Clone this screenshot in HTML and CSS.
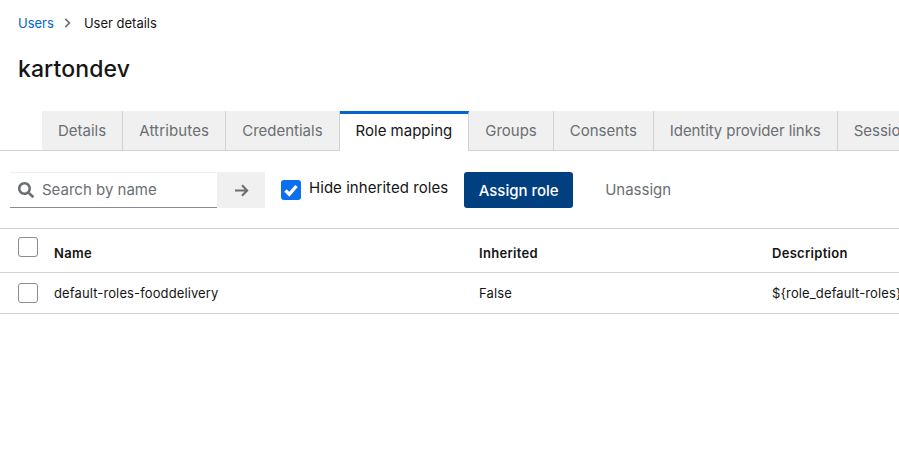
FILE: index.html
```html
<!DOCTYPE html>
<html lang="en">
<head>
    <meta charset="UTF-8">
    <meta name="viewport" content="width=device-width, initial-scale=1.0">
    <title>User details</title>
    <link rel="stylesheet" href="styles.css">
</head>
<body>
    <div class="header">
        <nav class="breadcrumb">
            <a href="#">Users</a>
            <svg class="crumbArrow" viewBox="0 0 8 12" width="7" height="10"><path d="M1.5 1 L6.2 6 L1.5 11" fill="none" stroke="#6a6e73" stroke-width="2"/></svg>
            <span>User details</span>
        </nav>
        <h1>kartondev</h1>
    </div>

    <div class="tabs">
        <div class="tab">Details</div>
        <div class="tab tabAttr">Attributes</div>
        <div class="tab">Credentials</div>
        <div class="tab active">Role mapping</div>
        <div class="tab">Groups</div>
        <div class="tab">Consents</div>
        <div class="tab tabLong">Identity provider links</div>
        <div class="tab">Sessions</div>
    </div>

    <div class="toolbar">
        <div class="search">
            <div class="searchInput">
                <svg viewBox="0 0 512 512" width="16" height="16"><path fill="#6a6e73" d="M505 442.700L405.300 343c-4.500-4.500-10.600-7-17-7H372c27.600-35.300 44-79.700 44-128C416 93.100 322.900 0 208 0S0 93.100 0 208s93.100 208 208 208c48.300 0 92.700-16.400 128-44v16.300c0 6.400 2.500 12.500 7 17l99.700 99.700c9.400 9.400 24.600 9.400 33.900 0l28.300-28.300c9.400-9.400 9.400-24.600.1-34zM208 336c-70.700 0-128-57.200-128-128 0-70.700 57.200-128 128-128 70.700 0 128 57.200 128 128 0 70.700-57.200 128-128 128z"/></svg>
                <span>Search by name</span>
            </div>
            <div class="searchGo">
                <svg viewBox="0 0 16 16" width="15" height="15"><path d="M1 8 H14 M8.500 2.500 L14 8 L8.500 13.500" fill="none" stroke="#6a6e73" stroke-width="2.200"/></svg>
            </div>
        </div>
        <label class="hideInherited">
            <span class="checked">
                <svg viewBox="0 0 16 16" width="16" height="16"><path d="M2.500 8.500 L6.300 12.300 L13.500 4" fill="none" stroke="#fff" stroke-width="3.400"/></svg>
            </span>
            <span class="hideText">Hide inherited roles</span>
        </label>
        <button class="assign">Assign role</button>
        <button class="unassign">Unassign</button>
    </div>

    <div class="row headRow">
        <span class="box headBox"></span>
        <span>Name</span>
        <span>Inherited</span>
        <span>Description</span>
    </div>
    <div class="row">
        <span class="box"></span>
        <span>default-roles-fooddelivery</span>
        <span>False</span>
        <span>${role_default-roles}</span>
    </div>
</body>
</html>
```
FILE: styles.css
```css
html, body {
    margin: 0;
    padding: 0;
    height: 100%;
    overflow: hidden;
    background-color: #fff;
    color: #151515;
    font-family: Inter, "Open Sans", sans-serif;
}

.header {
    padding: 14px 18px 0;
}

.breadcrumb {
    display: flex;
    align-items: center;
    height: 18px;
    font-size: 13px;
}

.breadcrumb a {
    color: #06c;
    text-decoration: none;
}

.crumbArrow {
    margin: 0 13px 0 10px;
}

h1 {
    margin: 0;
    padding-top: 20px;
    height: 34px;
    line-height: 34px;
    font-size: 23px;
    font-weight: 500;
    letter-spacing: 0.1px;
}

.tabs {
    display: flex;
    margin-top: 25px;
    padding-left: 42px;
    height: 40px;
    box-sizing: border-box;
    border-bottom: 1px solid #d2d2d2;
    white-space: nowrap;
}

.tab {
    flex: none;
    padding: 0 16px;
    height: 39px;
    line-height: 39px;
    box-sizing: border-box;
    font-size: 15px;
    color: #6a6e73;
    background-color: #f0f0f0;
    border-right: 1px solid #d2d2d2;
}

.tab.tabAttr {
    letter-spacing: 0.15px;
}

.tab.tabLong {
    letter-spacing: -0.08px;
}

.tab.active {
    height: 40px;
    color: #151515;
    background-color: #fff;
    border-top: 3px solid #06c;
    line-height: 34px;
}

.toolbar {
    display: flex;
    align-items: center;
    padding: 21px 0 0 10px;
    height: 36px;
}

.search {
    display: flex;
    height: 36px;
    width: 255px;
}

.searchInput {
    flex: 1;
    display: flex;
    align-items: center;
    gap: 8px;
    padding: 0 0 1px 8px;
    font-size: 15px;
    color: #6a6e73;
    border-top: 1px solid #f0f0f0;
    border-bottom: 1px solid #8a8d90;
    box-sizing: border-box;
}

.searchGo {
    width: 48px;
    display: flex;
    align-items: center;
    justify-content: center;
    background-color: #f0f0f0;
}

.hideInherited {
    display: flex;
    align-items: center;
    gap: 8px;
    margin-left: 16px;
    font-size: 15px;
    letter-spacing: 0.05px;
}

.hideText {
    margin-bottom: 6px;
}

.checked {
    display: flex;
    align-items: center;
    justify-content: center;
    width: 20px;
    height: 20px;
    background-color: #0b6ff0;
    border-radius: 3px;
}

button {
    font-family: inherit;
    font-size: 15px;
    border: none;
    height: 36px;
    padding-bottom: 1px;
    border-radius: 3px;
    cursor: pointer;
}

.assign {
    margin-left: 16px;
    width: 109px;
    color: #fff;
    background-color: #004080;
    font-weight: 500;
}

.unassign {
    margin-left: 16px;
    padding: 0 16px 1px;
    color: #6a6e73;
    background: none;
}

.row {
    display: grid;
    grid-template-columns: 54px 425px 293px 1fr;
    align-items: center;
    height: 41px;
    box-sizing: border-box;
    border-bottom: 1px solid #d2d2d2;
    font-size: 13px;
    letter-spacing: 0.12px;
    white-space: nowrap;
}

.headRow {
    margin-top: 20px;
    height: 45px;
    border-top: 1px solid #d2d2d2;
    font-weight: 600;
    letter-spacing: 0.3px;
    padding-top: 4px;
}

.box {
    width: 18px;
    height: 18px;
    margin-left: 18px;
    border: 1px solid #8a8d90;
    border-radius: 3px;
}

.headBox {
    margin-top: -12px;
}
```
